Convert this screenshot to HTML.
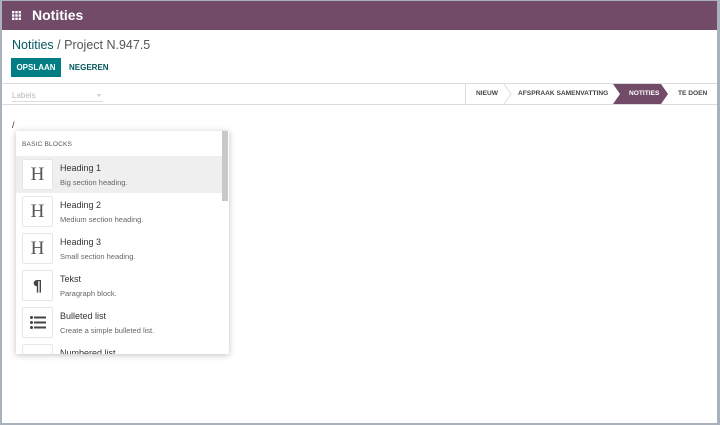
<!DOCTYPE html>
<html><head><meta charset="utf-8"><style>
*{box-sizing:border-box;margin:0;padding:0}
body{width:720px;height:425px;overflow:hidden;background:#fff;font-family:"Liberation Sans",sans-serif;position:relative}
.frame{position:absolute;left:0;top:0;width:720px;height:425px;border-left:2px solid #a9b2bb;border-right:3px solid #a9b2bb;border-bottom:2px solid #a9b2bb;border-top:1px solid #a9b2bb;pointer-events:none;z-index:10}
.top{position:absolute;left:0;top:0;width:720px;height:30px;background:#714b67;color:#fff}
.top .t{position:absolute;left:32px;top:7px;font-size:14px;font-weight:bold}
.bc{position:absolute;left:12px;top:38px;font-size:12.5px;color:#555}
.bc span{color:#01585f}
.btn1{position:absolute;left:11px;top:58px;width:50px;height:19px;background:#017e84;color:#fff;font-size:8px;font-weight:bold;text-align:center;line-height:19px}
.btn2{position:absolute;left:69px;top:58px;height:19px;color:#01585f;font-size:8px;font-weight:bold;line-height:19px}
.hl{position:absolute;left:2px;width:715px;height:1px;background:#dcdcdc}
.labels{position:absolute;left:12px;top:91px;width:91px;border-bottom:1px solid #ddd;font-size:8px;color:#bbb;height:11px}
.labels b{position:absolute;right:2px;top:3px;border:2px solid transparent;border-top:3px solid #ccc}
.stages{position:absolute;left:465px;top:84px;width:252px;height:20px;border-left:1px solid #ddd;font-size:6.6px;font-weight:bold;color:#444}
.st{position:absolute;top:0;height:20px;line-height:20px;white-space:nowrap}
.slash{position:absolute;left:12px;top:120px;font-size:9px;color:#333}
.menu{position:absolute;left:16px;top:131px;width:213px;height:223px;background:#fff;box-shadow:0 1px 6px rgba(0,0,0,.25);overflow:hidden}
.menu .h{font-size:6.5px;color:#555;position:absolute;left:6px;top:10px;letter-spacing:.2px}
.it{position:absolute;left:0;width:206px;height:37px}
.it.sel{background:#efefef}
.ic{position:absolute;left:6px;top:3px;width:31px;height:31px;background:#fff;border:1px solid #e6e6e6;border-radius:2px;text-align:center;line-height:30px;font-family:"Liberation Serif",serif;font-size:19px;color:#555}
.it .a{position:absolute;left:44px;top:7px;font-size:9px;color:#333}
.it .b{position:absolute;left:44px;top:22px;font-size:7.5px;color:#666}
.sb{position:absolute;left:206px;top:0;width:6px;height:70px;background:#c8c8c8}
</style></head><body>
<div class="top">
<svg style="position:absolute;left:12px;top:11px" width="9" height="9"><g fill="#fff"><rect x="0" y="0" width="2.4" height="2.4"/><rect x="3.3" y="0" width="2.4" height="2.4"/><rect x="6.6" y="0" width="2.4" height="2.4"/><rect x="0" y="3.3" width="2.4" height="2.4"/><rect x="3.3" y="3.3" width="2.4" height="2.4"/><rect x="6.6" y="3.3" width="2.4" height="2.4"/><rect x="0" y="6.6" width="2.4" height="2.4"/><rect x="3.3" y="6.6" width="2.4" height="2.4"/><rect x="6.6" y="6.6" width="2.4" height="2.4"/></g></svg>
<div class="t">Notities</div></div>
<div class="bc"><span>Notities</span> / Project N.947.5</div>
<div class="btn1">OPSLAAN</div>
<div class="btn2">NEGEREN</div>
<div class="hl" style="top:83px"></div>
<div class="hl" style="top:104px"></div>
<div class="labels">Labels<b></b></div>
<div class="stages">
<svg style="position:absolute;left:0;top:0" width="252" height="20">
<polyline points="38,0 45,10 38,20" fill="none" stroke="#ddd"/>
<polygon points="147,0 195,0 202,10 195,20 147,20 154,10" fill="#714b67"/>
</svg>
<div class="st" style="left:10px">NIEUW</div>
<div class="st" style="left:52px">AFSPRAAK SAMENVATTING</div>
<div class="st" style="left:163px;color:#fff">NOTITIES</div>
<div class="st" style="left:212px">TE DOEN</div>
</div>
<div class="slash">/</div>
<div class="menu">
<div class="h">BASIC BLOCKS</div>
<div class="it sel" style="top:25px"><div class="ic">H</div><div class="a">Heading 1</div><div class="b">Big section heading.</div></div>
<div class="it" style="top:62px"><div class="ic">H</div><div class="a">Heading 2</div><div class="b">Medium section heading.</div></div>
<div class="it" style="top:99px"><div class="ic">H</div><div class="a">Heading 3</div><div class="b">Small section heading.</div></div>
<div class="it" style="top:136px"><div class="ic" style="font-family:'DejaVu Sans';font-size:15px;font-weight:bold;color:#444">¶</div><div class="a">Tekst</div><div class="b">Paragraph block.</div></div>
<div class="it" style="top:173px"><div class="ic"><svg width="16" height="13" style="margin-top:8px"><g fill="#444"><circle cx="1.5" cy="1.5" r="1.5"/><circle cx="1.5" cy="6.5" r="1.5"/><circle cx="1.5" cy="11.5" r="1.5"/><rect x="4" y="0.5" width="12" height="2"/><rect x="4" y="5.5" width="12" height="2"/><rect x="4" y="10.5" width="12" height="2"/></g></svg></div><div class="a">Bulleted list</div><div class="b">Create a simple bulleted list.</div></div>
<div class="it" style="top:210px"><div class="ic" style="font-size:9px;font-family:'Liberation Sans'">1—</div><div class="a">Numbered list</div></div>
<div class="sb"></div>
</div>
<div class="frame"></div>
</body></html>
